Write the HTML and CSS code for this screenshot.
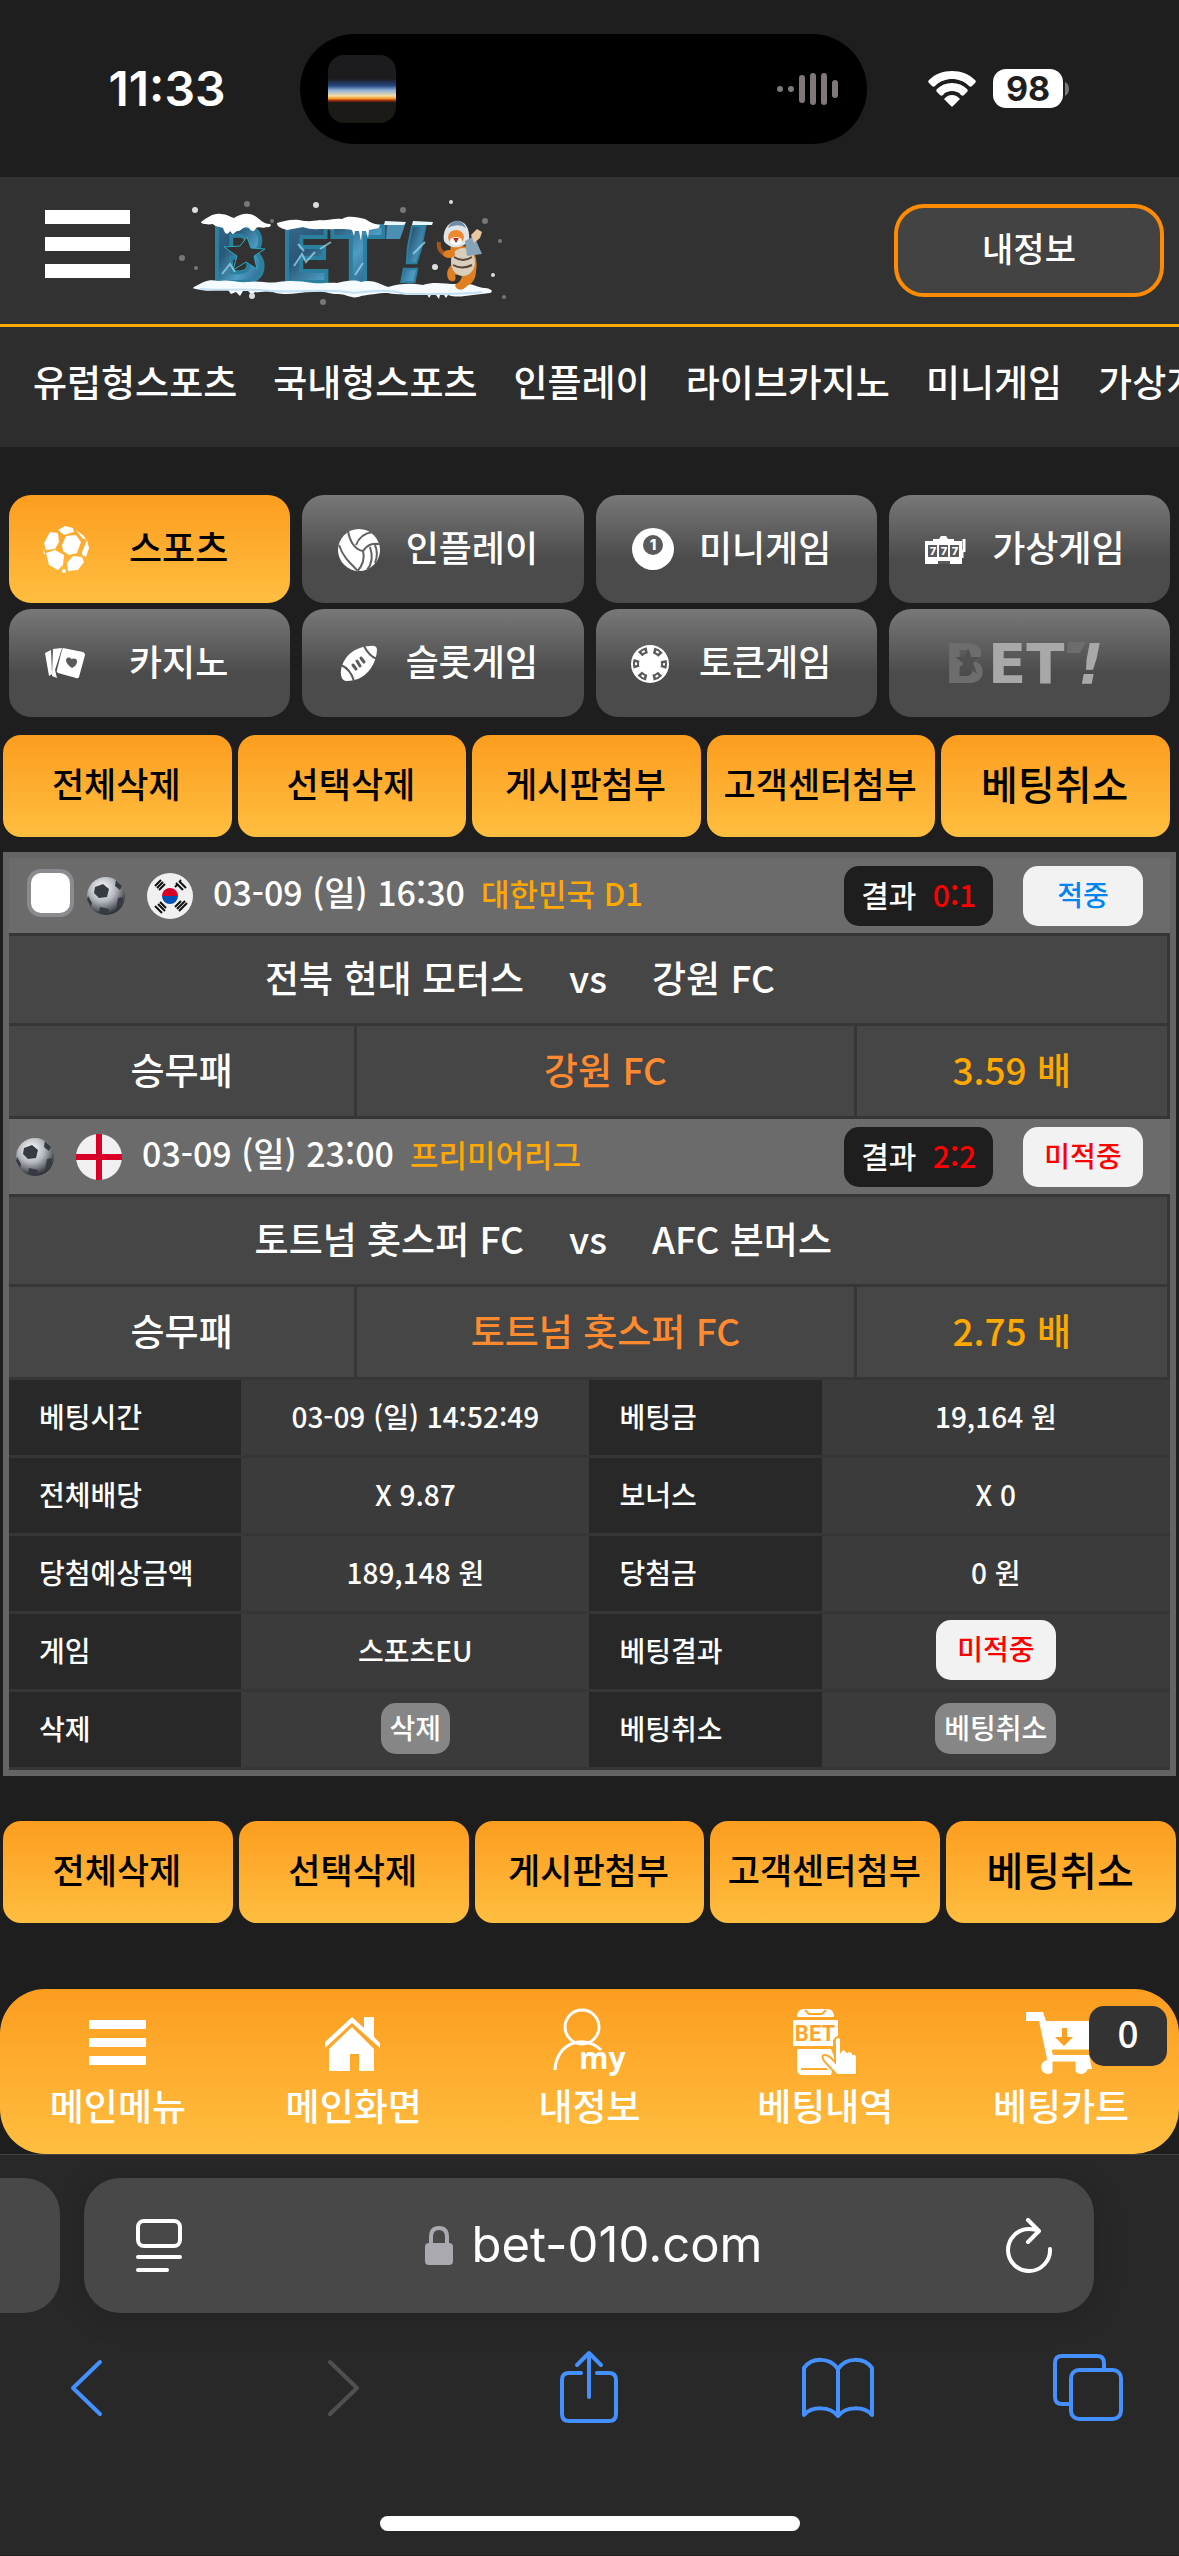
FILE: index.html
```html
<!DOCTYPE html>
<html lang="ko">
<head>
    <meta charset="UTF-8">
    <meta name="viewport" content="width=device-width, initial-scale=1.0">
    <title>베팅내역</title>
    <link rel="stylesheet" href="styles.css">
</head>
<body>
    <div class="status-bar">
        <time class="clock">11:33</time>
        <div class="island">
            <span class="album"></span>
            <svg class="wave" width="62" height="34" viewBox="0 0 62 34">
                <g stroke="#807878" stroke-width="6" stroke-linecap="round">
                    <path d="M3 17v.1M14 17v.1M25 6v22M36 4v26M47 4v26M58 11v12"/>
                </g>
            </svg>
        </div>
        <div class="status-icons">
            <svg width="48" height="38" viewBox="0 0 48 38" fill="#fff">
                <path d="M24 1C15 1 7 4 1 10c-1 1-1 2 0 3l3 3c1 1 2 1 3 0C12 11 18 9 24 9s12 2 17 7c1 1 2 1 3 0l3-3c1-1 1-2 0-3C41 4 33 1 24 1z"/>
                <path d="M24 13c-6 0-11 2-15 6-1 1-1 2 0 3l3 3c1 1 2 1 3 0 2-3 6-4 9-4s7 1 9 4c1 1 2 1 3 0l3-3c1-1 1-2 0-3-4-4-9-6-15-6z"/>
                <path d="M24 25c-3 0-5 1-7 3-1 1-1 2 0 2l6 6c1 1 1 1 2 0l6-6c1-1 1-1 0-2-2-2-4-3-7-3z"/>
            </svg>
            <span class="battery">98</span>
            <svg width="4" height="14" viewBox="0 0 4 14"><path d="M0 0q4 2 4 7t-4 7z" fill="#777"/></svg>
        </div>
    </div>

    <header class="header">
        <button class="menu-button" type="button" aria-label="메뉴"><i></i><i></i><i></i></button>
        <a class="logo" href="#" aria-label="BET!">
            <svg width="350" height="120" viewBox="0 0 350 120">
                <defs>
                    <linearGradient id="ice" x1="0" y1="0" x2="1" y2="1">
                        <stop offset="0" stop-color="#3d6f94"/>
                        <stop offset=".35" stop-color="#2a5878"/>
                        <stop offset=".6" stop-color="#4d9cc4"/>
                        <stop offset="1" stop-color="#173f66"/>
                    </linearGradient>
                </defs>
                <g class="logo-text" fill="url(#ice)" stroke="#2b7f9f" stroke-width="4">
                    <text x="40" y="91">B</text>
                    <text x="110" y="91">ET</text>
                    <text x="226" y="91" font-style="italic" stroke-width="2">!</text>
                </g>
                <path d="M217 31h19l-6 17h-14z" fill="#4b8fb5"/>
                <path d="M77 46l4 11 14 1-11 7 3 13-11-7-13 8 4-14-13-9 16-1z" fill="#323232" stroke="#28a9c4"/>
                <path d="M124 75l8-12 4 8 9-10M128 53l6 7M150 58l11-7M52 83l8-10 5 8M243 63l12-12M185 84l8-12" stroke="#a4dcf2" stroke-width="2" fill="none" opacity=".7"/>
                <path d="M31 31c6-4 12-9 20-8 6 0 9 3 13 4 6-4 14-6 21-2 5 3 8 8 15 8 2 1 0 4-3 3-5 2-8-1-11 1-2 5-5 3-7 0-6-3-8 4-12 3-5 3-3 5-7 0-3 5-5 3-7-3-4-2-8-1-10-4-5 1-12 0-12-2z" fill="#fff"/>
                <path d="M107 32c8-2 13-4 22-3 9 2 13 1 21 0 8 1 13-2 22-1 6-4 15-2 23 0 6 4 10 5 15 6l-1 3-10 2-1 8-2-7h-4l-1 10-2-10h-4l-1 5-2-6c-10-2-18 0-27-1-8 0-15 1-22-2l-16 3c-6-2-10-3-10-7z" fill="#fff"/>
                <path d="M215 30l21 1-2 3h-20zM243 30l20 1-1 3h-20z" fill="#e8f6fc"/>
                <path d="M24 96c10-5 14-8 24-6 11-2 19 2 30 1 12-2 20 2 30 0 13-2 23-1 35 1 10 1 16-1 24 0 9-2 17-4 24-1 12-3 18 2 27 5 13-4 23-4 35-2 11-4 22-1 33-1 13-3 19 3 29 4 8 1 8 4 5 5l-17 2c-9 1-17 3-25 0l-2 3-2-3h-4l-1 4-3-4h-5l-2 3-2-4c-14-1-25 2-39-1-12 0-18 2-27 3-9 4-14-2-23-2-10 0-15-4-25-2-14 0-24 4-37 1-9-4-13 0-21-1l-3 3-4-4h-5l-3 5-4-4-5 2-3-4c-12-1-18 2-26 0-6-1-11-1-8-3z" fill="#f6fbff"/>
                <path d="M30 98c24 2 48-1 70 2 28 2 58-3 84 2 20-2 34-4 52 1 26 0 52 1 76-2" stroke="#c3e0f5" stroke-width="2" fill="none"/>
                <!-- tiger mascot -->
                <path d="M276 64c-6-3-8-8-7-13" stroke="#a4561b" stroke-width="4" fill="none"/>
                <path d="M281 54c-2 9 0 14 2 19-5 3-8 10-4 16 5 3 8 0 6-5l7-1c0 5-2 8-7 11 1 6 8 6 12 1 5-2 9-7 9-15 2-10-1-16-4-24z" fill="#e07e22"/>
                <ellipse cx="293" cy="71" rx="12" ry="14" fill="#d9cdbb"/>
                <path d="M284 66q9 6 18 0M283 74q9 5 19 0" stroke="#5a4636" stroke-width="2" fill="none"/>
                <path d="M274 50c-2-11 5-20 13-20 9 0 13 8 12 19-6 9-19 10-25 1z" fill="#dfe4e8"/>
                <path d="M278 37c4-10 14-9 18 0-6-4-12-3-18 0z" fill="#6d8da5"/>
                <ellipse cx="286" cy="46" rx="8" ry="7" fill="#ee8930"/>
                <ellipse cx="286" cy="50" rx="6" ry="4" fill="#fff"/>
                <path d="M283 47h6l-3 5z" fill="#b42a20"/>
                <path d="M295 50l9-5 8 18-15 2z" fill="#86a3b8"/>
                <path d="M301 44l6-6 5 3-2 6-6 5z" fill="#e9c7a2"/>
                <ellipse cx="279" cy="63" rx="6" ry="4" fill="#e07e22"/>
                <g fill="#ddd">
                    <circle cx="25" cy="19" r="3"/><circle cx="146" cy="14" r="3"/><circle cx="265" cy="76" r="3"/><circle cx="82" cy="105" r="3"/><circle cx="323" cy="84" r="2"/><circle cx="281" cy="11" r="2"/>
                </g>
                <g fill="#777">
                    <circle cx="77" cy="13" r="3"/><circle cx="102" cy="30" r="2"/><circle cx="12" cy="67" r="3"/><circle cx="26" cy="77" r="2"/><circle cx="233" cy="19" r="3"/><circle cx="315" cy="30" r="3"/><circle cx="330" cy="50" r="2"/><circle cx="153" cy="111" r="3"/><circle cx="334" cy="106" r="2"/>
                </g>
            </svg>
        </a>
        <a class="my-info" href="#">내정보</a>
    </header>

    <nav class="top-nav">
        <a href="#">유럽형스포츠</a>
        <a href="#">국내형스포츠</a>
        <a href="#">인플레이</a>
        <a href="#">라이브카지노</a>
        <a href="#">미니게임</a>
        <a href="#">가상게임</a>
    </nav>

    <main>
        <div class="game-tabs">
            <button class="game-tab active" type="button">
                <svg viewBox="0 0 48 48" fill="#fff">
                    <path d="M19 20l4-9 10-1 5 7-4 11-8 2-6-4zM1 18L7 7l8 1 1 9-4 7-9 1zM15 5l7-4 8 2 1 4-10 3zM3 28l9-3 9 5-1 10-5 5-9-5zM24 38l6-7 9 1 2 5-6 8-10 1zM39 27l5-12 2 8-3 9-4-2zM33 5l8 6 2 4-4-2zM0 23l2 5-1 2z"/>
                    <circle cx="21" cy="46" r="2"/>
                </svg>
                <span>스포츠</span>
            </button>
            <button class="game-tab" type="button">
                <svg viewBox="0 0 48 48">
                    <circle cx="23" cy="25" r="21" fill="#fff"/>
                    <g fill="none" stroke="#626262" stroke-width="2">
                        <path d="M12 6c2 12 8 19 15 20 2 7 0 14-6 21M20 20c3-8 9-12 17-13M27 26c5-7 10-8 17-7M3 20c4 12 11 18 18 25M34 22c3 9 2 17-3 23M39 20c3 7 2 13 0 18"/>
                    </g>
                </svg>
                <span>인플레이</span>
            </button>
            <button class="game-tab" type="button">
                <svg viewBox="0 0 48 48">
                    <circle cx="23" cy="24" r="21" fill="#fff"/>
                    <circle cx="23" cy="20" r="10" fill="#5a5a5a"/>
                    <text class="ball-number" x="23" y="25" fill="#fff">1</text>
                </svg>
                <span>미니게임</span>
            </button>
            <button class="game-tab" type="button">
                <svg viewBox="0 0 48 48">
                    <path d="M2 16h8v-2h6l2-3h5l2 3h6v2h8v23H2z" fill="#fff"/>
                    <path d="M41 14v13M39 25v8" stroke="#fff" stroke-width="3"/>
                    <path d="M5 20h9v12H5zM16 20h9v12h-9zM27 20h9v12h-9zM15 36h12v3H15z" fill="#5a5a5a"/>
                    <g class="slot-number" fill="#fff"><text x="10" y="30">7</text><text x="21" y="30">7</text><text x="32" y="30">7</text></g>
                </svg>
                <span>가상게임</span>
            </button>
            <button class="game-tab" type="button">
                <svg viewBox="0 0 48 48" fill="#fff">
                    <path d="M2 14l6-3 1 24-3 2zM10 10l9-1-7 22 2 8-5-2z"/>
                    <path d="M20 9l20 4q2 1 2 3l-6 22q-1 2-3 1l-18-5q-2-1-1-3l5-20z"/>
                    <path d="M29 29c-6-4-7-8-5-10 2-1 4 0 4 1 2-1 6-1 6 2 0 4-3 6-5 7z" fill="#5a5a5a"/>
                </svg>
                <span>카지노</span>
            </button>
            <button class="game-tab" type="button">
                <svg viewBox="0 0 48 48">
                    <path d="M5 36C4 23 14 8 34 7q7-1 7 4C40 27 29 42 11 42q-5 0-6-6z" fill="#fff"/>
                    <path d="M28 7c3 6 7 11 13 13M5 26c7 3 11 9 13 16" fill="none" stroke="#5a5a5a" stroke-width="2"/>
                    <path d="M17 26l3 4M21 22l3 5M25 19l3 4" stroke="#5a5a5a" stroke-width="3" stroke-linecap="round"/>
                </svg>
                <span>슬롯게임</span>
            </button>
            <button class="game-tab" type="button">
                <svg viewBox="0 0 48 48">
                    <circle cx="20" cy="25" r="19" fill="#fff"/>
                    <circle cx="20" cy="25" r="14" fill="none" stroke="#5a5a5a" stroke-width="6" stroke-dasharray="8 6.66" stroke-dashoffset="4"/>
                    <circle cx="20" cy="25" r="14" fill="none" stroke="#fff" stroke-width="2" stroke-dasharray="3 11.66" stroke-dashoffset="1.5"/>
                </svg>
                <span>토큰게임</span>
            </button>
            <button class="game-tab logo-tab" type="button" aria-label="BET!">
                <svg viewBox="0 0 170 74">
                    <g class="tab-logo-text" fill="#a8a8a8">
                        <text x="0" y="57" fill="#6d6d6d">B</text>
                        <text x="44" y="57">ET</text>
                        <text x="134" y="57" font-style="italic">!</text>
                    </g>
                    <path d="M124 16h18l-6 11h-13z" fill="#6d6d6d"/>
                    <path d="M24 22l3 9h10l-8 6 4 11-9-7-9 7 4-11-8-6h10z" fill="#505050"/>
                </svg>
            </button>
        </div>

        <div class="actions">
            <button type="button">전체삭제</button>
            <button type="button">선택삭제</button>
            <button type="button">게시판첨부</button>
            <button type="button">고객센터첨부</button>
            <button class="cancel" type="button">베팅취소</button>
        </div>

        <section class="slip">
            <article>
                <div class="match-head">
                    <input class="check" type="checkbox" aria-label="베팅 선택">
                    <svg class="ball" viewBox="0 0 40 40">
                        <defs>
                            <radialGradient id="shade" cx=".4" cy=".3" r=".7">
                                <stop offset="0" stop-color="#fff"/>
                                <stop offset=".5" stop-color="#b4b8be"/>
                                <stop offset="1" stop-color="#2c3036"/>
                            </radialGradient>
                        </defs>
                        <circle cx="20" cy="20" r="19" fill="url(#shade)"/>
                        <path d="M9 11l8-3 6 5-2 8-8 1-5-5zM30 4l6 6-2 4-5-4zM32 22l5-1-1 9-6 4zM2 20l4 7-1 4-4-7zM14 31l9 2-1 6-9-2z" fill="#363b43"/>
                    </svg>
                    <svg class="flag" viewBox="0 0 46 46">
                        <circle cx="23" cy="23" r="23" fill="#f0f0f0"/>
                        <path d="M15 23a8 8 0 0 1 16 0z" fill="#d80027"/>
                        <path d="M15 23a8 8 0 0 0 16 0z" fill="#0052b4"/>
                        <g stroke="#111" stroke-width="2">
                            <path d="M8 13l6-6M10 15l6-6M12 17l6-6M29 10l7 7M32 8l7 7M28 14l3-3M34 7l-1 1M8 33l7 7M11 31l7 7M13 29l6 6M30 36l8-8M32 38l8-8M28 34l6-6"/>
                        </g>
                    </svg>
                    <span class="date">03-09 (일) 16:30</span>
                    <span class="league">대한민국 D1</span>
                    <span class="result">결과 <b>0:1</b></span>
                    <span class="badge hit">적중</span>
                </div>
                <div class="teams"><span>전북 현대 모터스</span><span>vs</span><span>강원 FC</span></div>
                <div class="pick"><span>승무패</span><span class="choice">강원 FC</span><span class="odds">3.59 배</span></div>
            </article>
            <article>
                <div class="match-head second">
                    <svg class="ball" viewBox="0 0 40 40">
                        <circle cx="20" cy="20" r="19" fill="url(#shade)"/>
                        <path d="M9 11l8-3 6 5-2 8-8 1-5-5zM30 4l6 6-2 4-5-4zM32 22l5-1-1 9-6 4zM2 20l4 7-1 4-4-7zM14 31l9 2-1 6-9-2z" fill="#363b43"/>
                    </svg>
                    <svg class="flag" viewBox="0 0 46 46">
                        <circle cx="23" cy="23" r="23" fill="#f0f0f0"/>
                        <path d="M20 0h6v20h20v6H26v20h-6V26H0v-6h20z" fill="#d80027"/>
                    </svg>
                    <span class="date">03-09 (일) 23:00</span>
                    <span class="league">프리미어리그</span>
                    <span class="result">결과 <b>2:2</b></span>
                    <span class="badge miss">미적중</span>
                </div>
                <div class="teams"><span>토트넘 홋스퍼 FC</span><span>vs</span><span>AFC 본머스</span></div>
                <div class="pick"><span>승무패</span><span class="choice">토트넘 홋스퍼 FC</span><span class="odds">2.75 배</span></div>
            </article>
            <table class="details">
                <tr><th>베팅시간</th><td>03-09 (일) 14:52:49</td><th>베팅금</th><td>19,164 원</td></tr>
                <tr><th>전체배당</th><td>X 9.87</td><th>보너스</th><td>X 0</td></tr>
                <tr><th>당첨예상금액</th><td>189,148 원</td><th>당첨금</th><td>0 원</td></tr>
                <tr><th>게임</th><td>스포츠EU</td><th>베팅결과</th><td><span class="badge miss">미적중</span></td></tr>
                <tr><th>삭제</th><td><button class="small-button" type="button">삭제</button></td><th>베팅취소</th><td><button class="small-button" type="button">베팅취소</button></td></tr>
            </table>
        </section>

        <div class="actions bottom">
            <button type="button">전체삭제</button>
            <button type="button">선택삭제</button>
            <button type="button">게시판첨부</button>
            <button type="button">고객센터첨부</button>
            <button class="cancel" type="button">베팅취소</button>
        </div>
    </main>

    <nav class="tab-bar">
        <a href="#">
            <svg viewBox="0 0 76 76" fill="#fff"><path d="M9 14h57v9H9zM9 32h57v9H9zM9 50h57v9H9z"/></svg>
            메인메뉴
        </a>
        <a href="#">
            <svg viewBox="0 0 76 76" fill="#fff">
                <path d="M9 36l27-25 12 11V11h10v20l6 6v5L36 17 9 42z"/>
                <path d="M13 43l23-22 22 22v22H43V48h-9v17H13z"/>
            </svg>
            메인화면
        </a>
        <a href="#">
            <svg viewBox="0 0 76 76">
                <path d="M4 64c1-28 30-36 46-20" fill="none" stroke="#fff" stroke-width="3"/>
                <ellipse cx="31" cy="21" rx="17" ry="17" fill="none" stroke="#fff" stroke-width="3"/>
                <text class="my-text" x="28" y="63" fill="#fff">my</text>
            </svg>
            내정보
        </a>
        <a href="#">
            <svg viewBox="0 0 76 76">
                <path d="M10 11q0-8 7-8h23q7 0 7 8zM6 14h45v16l-5 4v6H6zM10 43h34l4 10-4 16H16q-6 0-6-6z" fill="#fff"/>
                <path d="M18 4l4 4h13l4-4M14 63h26" fill="none" stroke="#fda92c" stroke-width="2"/>
                <path d="M48 33q3-4 6 0v12q3-4 6 1 4-3 6 2 3-1 4 3v18H50L37 55q-3-5 0-6 4-1 11 7z" fill="#fff" stroke="#fda92c" stroke-width="2"/>
                <text class="bet-text" x="28" y="35">BET</text>
            </svg>
            베팅내역
        </a>
        <a href="#">
            <svg viewBox="0 0 76 76">
                <path d="M3 6h17l3 9h53l-5 29H29l1 5h36l3 14H21l3-10L16 15H3z" fill="#fff"/>
                <circle cx="25" cy="61" r="7" fill="#fff"/><circle cx="58" cy="61" r="7" fill="#fff"/>
                <path d="M29 45h40M31 57h20v8H31z" fill="#fdae32" stroke="#fdae32" stroke-width="3"/>
                <path d="M39 22h5v9h6l-9 9-9-9h7z" fill="#fc9f24"/>
            </svg>
            베팅카트
            <span class="cart-count">0</span>
        </a>
    </nav>

    <footer class="browser">
        <div class="address-row">
            <span class="prev-page"></span>
            <div class="address">
                <button type="button" aria-label="페이지 설정">
                    <svg width="48" height="56" viewBox="0 0 48 56" fill="none" stroke="#fff" stroke-width="4" stroke-linecap="round">
                        <rect x="3" y="3" width="42" height="25" rx="6"/><path d="M3 39h42M3 52h29"/>
                    </svg>
                </button>
                <a class="domain" href="#">
                    <svg width="28" height="40" viewBox="0 0 28 40">
                        <path d="M6 18v-7q0-9 8-9t8 9v7" fill="none" stroke="#aaa9b0" stroke-width="4"/>
                        <rect y="17" width="28" height="22" rx="4" fill="#aaa9b0"/>
                    </svg>
                    bet-010.com
                </a>
                <button type="button" aria-label="새로 고침">
                    <svg width="48" height="56" viewBox="0 0 48 56" fill="none" stroke="#fff" stroke-width="4" stroke-linecap="round" stroke-linejoin="round">
                        <path d="M45 31a21 21 0 1 1-21-20q6 0 10 2M23 2l11 11-11 11"/>
                    </svg>
                </button>
            </div>
        </div>
        <div class="toolbar">
            <button type="button" aria-label="뒤로">
                <svg viewBox="0 0 76 76"><path d="M49 12L22 38l27 26"/></svg>
            </button>
            <button class="off" type="button" aria-label="앞으로" disabled>
                <svg viewBox="0 0 76 76"><path d="M29 12l27 26-27 26"/></svg>
            </button>
            <button type="button" aria-label="공유">
                <svg viewBox="0 0 76 76"><path d="M30 23H18q-7 0-7 7v34q0 7 7 7h40q7 0 7-7V30q0-7-7-7H46M38 47V4M26 15L38 3l12 12"/></svg>
            </button>
            <button type="button" aria-label="책갈피">
                <svg viewBox="0 0 76 76"><path d="M38 19C30 7 12 7 4 18v47c8-9 26-9 34 1 8-10 26-10 34-1V18C64 7 46 7 38 19v46"/></svg>
            </button>
            <button type="button" aria-label="탭">
                <svg viewBox="0 0 76 76"><path d="M21 54h-9q-7 0-7-7V13q0-7 7-7h35q7 0 7 7v7"/><rect x="21" y="20" width="50" height="49" rx="8"/></svg>
            </button>
        </div>
        <div class="home-indicator"></div>
    </footer>
</body>
</html>
```

FILE: styles.css
```css
* {
    box-sizing: border-box;
}
body {
    margin: 0;
    font-family: "Noto Sans CJK KR", sans-serif;
    font-weight: 500;
    line-height: 1.2;
    background-color: #1e1e1e;
    color: #fff;
    overflow-x: hidden;
}
a {
    color: inherit;
    text-decoration: none;
}
button {
    font: inherit;
    color: inherit;
    background: none;
    border: none;
    padding: 0;
    cursor: pointer;
}
svg {
    display: block;
    flex: none;
}

/* status bar */
.status-bar {
    display: grid;
    grid-template-columns: 300px 1fr 312px;
    align-items: center;
    height: 177px;
    font-family: Inter, sans-serif;
}
.clock {
    padding-left: 34px;
    font-size: 48px;
    font-weight: 600;
    text-align: center;
}
.island {
    display: flex;
    align-items: center;
    justify-content: space-between;
    height: 110px;
    padding: 0 28px;
    border-radius: 55px;
    background: #000;
}
.album {
    width: 68px;
    height: 68px;
    border-radius: 16px;
    background: linear-gradient(#1c1c1f 35%, #24467f 45%, #8fb0d8 52%, #f4dca8 60%, #f59a28 64%, #a02c0c 67%, #1c1a17 70%);
}
.status-icons {
    display: flex;
    align-items: center;
    padding-left: 61px;
}
.battery {
    width: 70px;
    margin: 0 2px 0 17px;
    border-radius: 13px;
    background: #fff;
    color: #1e1e1e;
    font-size: 34px;
    font-weight: 700;
    line-height: 39px;
    text-align: center;
}

/* header */
.header {
    display: flex;
    align-items: center;
    height: 150px;
    padding: 0 15px 0 45px;
    background: #323232;
    border-bottom: 3px solid #ffa800;
}
.menu-button {
    display: flex;
    flex-direction: column;
    gap: 13px;
    width: 85px;
    padding-bottom: 14px;
}
.menu-button i {
    height: 14px;
    background: #fff;
}
.logo {
    margin-left: 40px;
}
.logo-text {
    font-family: "DejaVu Sans", sans-serif;
    font-size: 76px;
    font-weight: bold;
}
.my-info {
    width: 270px;
    margin-left: auto;
    padding: 20px 0 24px;
    border: 4px solid #ff8c00;
    border-radius: 30px;
    background: #434343;
    font-size: 34px;
    text-align: center;
}
.top-nav {
    display: flex;
    gap: 36px;
    padding: 32px 0 44px 33px;
    overflow: hidden;
    background: #2d2d2d;
    font-size: 37px;
    white-space: nowrap;
}

/* game tabs */
.game-tabs {
    display: grid;
    grid-template-columns: repeat(4, 1fr);
    gap: 6px 12px;
    padding: 48px 9px 18px;
}
.game-tab {
    display: flex;
    align-items: center;
    height: 108px;
    padding: 0 24px 0 34px;
    border-radius: 22px;
    background: linear-gradient(#787878, #4b4b4b 60%);
    font-size: 36px;
}
.game-tab svg {
    width: 48px;
}
.game-tab span {
    flex: 1;
    padding-bottom: 6px;
}
.game-tab.active {
    background: linear-gradient(#fc9d1f, #ffbe40);
    color: #000;
}
.game-tab.logo-tab {
    justify-content: center;
    padding: 0;
}
.logo-tab svg {
    width: 170px;
}
.tab-logo-text {
    font-family: "DejaVu Sans", sans-serif;
    font-size: 56px;
    font-weight: bold;
}
.ball-number,
.slot-number {
    font-family: Inter, sans-serif;
    font-size: 15px;
    font-weight: 800;
    text-anchor: middle;
}
.slot-number {
    font-size: 11px;
}

/* action buttons */
.actions {
    display: grid;
    grid-template-columns: repeat(5, 1fr);
    gap: 6px;
    padding: 0 9px 15px 3px;
}
.actions.bottom {
    padding: 45px 3px 66px;
}
.actions button {
    height: 102px;
    padding: 0 2px 6px 0;
    border-radius: 18px;
    background: linear-gradient(#fc9d1f, #ffbe40);
    color: #000;
    font-size: 35px;
    white-space: nowrap;
}
.actions .cancel {
    font-size: 40px;
}

/* bet slip */
.slip {
    margin: 0 3px;
    border: 6px solid #646464;
}
.match-head {
    display: flex;
    align-items: center;
    height: 78px;
    padding: 0 27px 0 18px;
    background: #6b6b6b;
    border-bottom: 3px solid #363636;
}
.match-head.second {
    padding-left: 6px;
}
.check {
    appearance: none;
    width: 47px;
    height: 48px;
    margin: 0 12px 6px 0;
    border: 4px solid #8a8a8f;
    border-radius: 14px;
    background: #fff;
}
.ball {
    width: 40px;
}
.flag {
    width: 46px;
    margin: 0 20px 0 21px;
}
.date,
.league {
    padding-bottom: 6px;
    font-size: 34px;
}
.league {
    margin-left: 16px;
    color: #ffa800;
    font-size: 31px;
}
.result {
    margin-left: auto;
    padding: 0 17px 4px;
    border-radius: 15px;
    background: #1e1e1e;
    font-size: 30px;
    line-height: 56px;
}
.result b {
    margin-left: 8px;
    color: #f00;
    font-weight: 500;
}
.badge {
    display: inline-block;
    width: 120px;
    padding-bottom: 4px;
    border-radius: 15px;
    background: #f2f2f2;
    font-size: 28px;
    line-height: 56px;
    text-align: center;
}
.match-head .badge {
    margin-left: 30px;
}
.hit {
    color: #0085f2;
}
.miss {
    color: #f00;
}
.teams {
    display: grid;
    grid-template-columns: 1fr 128px 1fr;
    align-items: center;
    height: 90px;
    padding-bottom: 6px;
    border: solid #363636;
    border-width: 0 3px 3px 0;
    background: #464646;
    font-size: 37px;
    text-align: center;
}
.teams span:first-child {
    text-align: right;
}
.teams span:last-child {
    text-align: left;
}
.pick {
    display: grid;
    grid-template-columns: 30fr 43fr 27fr;
    height: 93px;
    border-bottom: 3px solid #363636;
    background: #464646;
    font-size: 37px;
    line-height: 86px;
    text-align: center;
}
.pick span {
    border-right: 3px solid #363636;
}
.choice {
    color: #ff8a30;
}
.odds {
    color: #ffa800;
}
.details {
    width: 100%;
    table-layout: fixed;
    border-spacing: 0;
    font-size: 28px;
}
.details th,
.details td {
    height: 78px;
    padding: 0 0 3px;
    border-bottom: 3px solid #363636;
}
.details th {
    width: 20%;
    padding-left: 30px;
    background: #282828;
    font-weight: 500;
    text-align: left;
}
.details td {
    width: 30%;
    background: #3b3b3b;
    text-align: center;
}
.details .badge {
    display: block;
    margin: 0 auto;
}
.small-button {
    padding: 0 9px 2px;
    border-radius: 15px;
    background: #868686;
    line-height: 49px;
}

/* bottom tab bar */
.tab-bar {
    display: grid;
    grid-template-columns: repeat(5, 1fr);
    height: 165px;
    padding-top: 17px;
    border-radius: 45px;
    background: linear-gradient(#fc9d1f, #ffbe40);
    font-size: 37px;
}
.tab-bar a {
    position: relative;
    display: flex;
    flex-direction: column;
    align-items: center;
    gap: 1px;
}
.tab-bar svg {
    width: 76px;
}
.my-text {
    font-family: "Open Sans", sans-serif;
    font-size: 30px;
    font-weight: bold;
}
.bet-text {
    fill: #fda52a;
    font-family: Roboto, sans-serif;
    font-size: 22px;
    font-weight: bold;
    text-anchor: middle;
}
.cart-count {
    position: absolute;
    top: 0;
    right: 12px;
    width: 78px;
    padding-bottom: 8px;
    border-radius: 15px;
    background: #333;
    line-height: 52px;
    text-align: center;
}

/* browser controls */
.browser {
    padding-bottom: 24px;
    border-top: 1px solid #444;
    background: #282828;
    font-family: Inter, sans-serif;
    font-weight: 400;
}
.address-row {
    display: flex;
    gap: 24px;
    padding: 23px 85px 31px 0;
}
.prev-page {
    width: 60px;
    border-radius: 0 36px 36px 0;
    background: #484848;
}
.address {
    display: flex;
    flex: 1;
    align-items: center;
    justify-content: space-between;
    height: 135px;
    padding: 0 41px 0 51px;
    border-radius: 36px;
    background: #484848;
    box-shadow: 0 4px 30px rgba(0, 0, 0, 0.15);
}
.domain {
    display: flex;
    align-items: center;
    gap: 18px;
    font-size: 49px;
}
.toolbar {
    display: flex;
    justify-content: space-between;
    padding: 6px 53px 90px 51px;
}
.toolbar svg {
    width: 76px;
    fill: none;
    stroke: #4590ff;
    stroke-width: 4;
    stroke-linecap: round;
    stroke-linejoin: round;
}
.toolbar .off svg {
    stroke: #505050;
}
.home-indicator {
    width: 420px;
    height: 15px;
    margin: 0 auto;
    border-radius: 8px;
    background: #fff;
}
```
